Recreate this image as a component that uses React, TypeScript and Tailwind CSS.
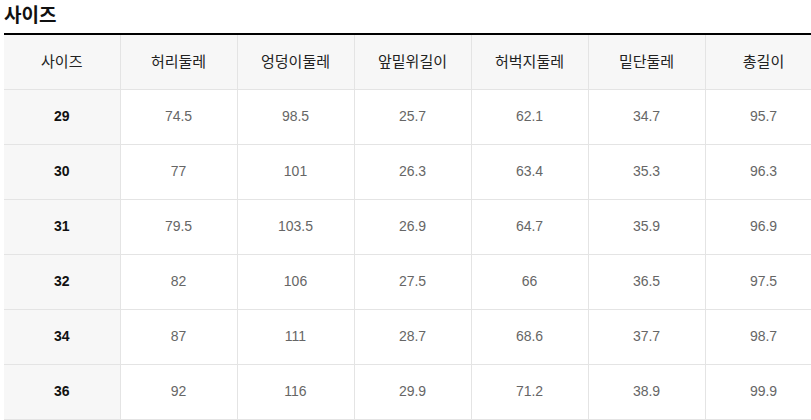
import React from "react";

const headers = ["사이즈", "허리둘레", "엉덩이둘레", "앞밑위길이", "허벅지둘레", "밑단둘레", "총길이"];

const rows: string[][] = [
  ["29", "74.5", "98.5", "25.7", "62.1", "34.7", "95.7"],
  ["30", "77", "101", "26.3", "63.4", "35.3", "96.3"],
  ["31", "79.5", "103.5", "26.9", "64.7", "35.9", "96.9"],
  ["32", "82", "106", "27.5", "66", "36.5", "97.5"],
  ["34", "87", "111", "28.7", "68.6", "37.7", "98.7"],
  ["36", "92", "116", "29.9", "71.2", "38.9", "99.9"],
];

export default function App() {
  return (
    <div
      className="w-[811px] h-[420px] overflow-hidden bg-white pl-[4px]"
      style={{ fontFamily: '"Liberation Sans", "Noto Sans CJK KR", sans-serif' }}
    >
      {/* Title */}
      <h2 className="h-[33px] pt-[3px] text-[19px] font-bold leading-[26px] text-[#111]">사이즈</h2>

      {/* Size table */}
      <table className="table-fixed w-[818px] border-collapse border-t-2 border-black text-[14px]">
        <colgroup>
          <col className="w-[116px]" />
          <col className="w-[117px]" />
          <col className="w-[117px]" />
          <col className="w-[117px]" />
          <col className="w-[117px]" />
          <col className="w-[117px]" />
          <col className="w-[117px]" />
        </colgroup>
        <thead>
          <tr>
            {headers.map((h) => (
              <th
                key={h}
                className="h-[55px] p-0 bg-[#f7f7f7] border-b border-r border-[#e4e4e4] text-[15px] font-normal text-[#222] text-center"
              >
                {h}
              </th>
            ))}
          </tr>
        </thead>
        <tbody>
          {rows.map((row) => (
            <tr key={row[0]}>
              {row.map((v, i) =>
                i === 0 ? (
                  <td
                    key={i}
                    className="h-[55px] p-0 bg-[#f7f7f7] border-b border-r border-[#e4e4e4] font-bold text-[#111] text-center"
                  >
                    {v}
                  </td>
                ) : (
                  <td
                    key={i}
                    className="h-[55px] p-0 bg-white border-b border-r border-[#e4e4e4] text-[#666] text-center"
                  >
                    {v}
                  </td>
                )
              )}
            </tr>
          ))}
        </tbody>
      </table>
    </div>
  );
}
